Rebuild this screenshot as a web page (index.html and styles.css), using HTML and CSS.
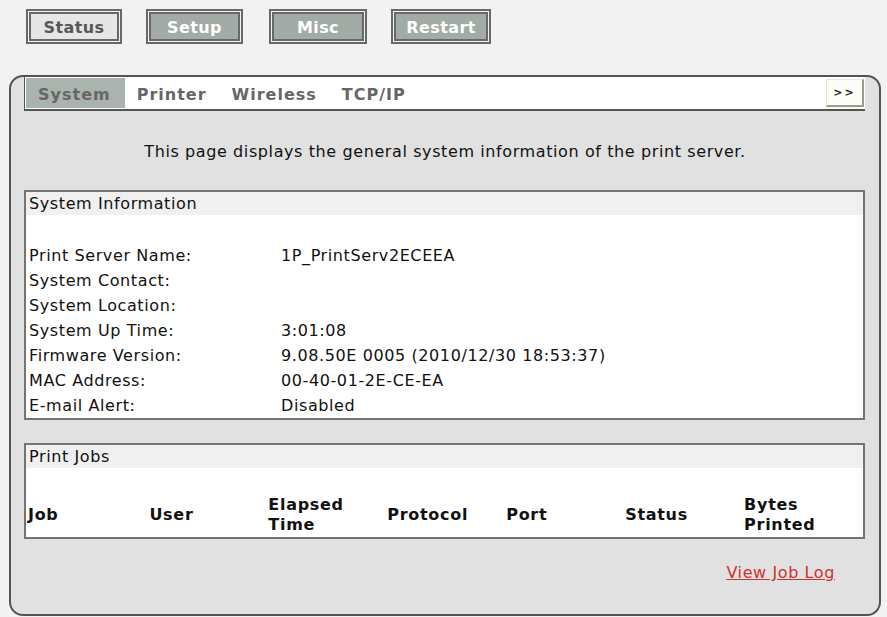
FILE: index.html
```html
<!DOCTYPE html>
<html>
<head>
<meta charset="utf-8">
<title>Print Server - System</title>
<link rel="stylesheet" href="styles.css">
</head>
<body>
<div class="topnav">
  <a class="btn btn-active w96">Status</a>
  <a class="btn w97">Setup</a>
  <a class="btn w98">Misc</a>
  <a class="btn w100">Restart</a>
</div>
<div class="panel">
  <div class="tabbar">
    <span class="tab tab-active">System</span>
    <span class="tab">Printer</span>
    <span class="tab">Wireless</span>
    <span class="tab">TCP/IP</span>
    <span class="more">&gt;&gt;</span>
  </div>
  <p class="desc">This page displays the general system information of the print server.</p>
  <div class="box">
    <div class="box-head">System Information</div>
    <div class="blank"></div>
    <div class="row"><span class="lbl">Print Server Name:</span><span>1P_PrintServ2ECEEA</span></div>
    <div class="row"><span class="lbl">System Contact:</span><span></span></div>
    <div class="row"><span class="lbl">System Location:</span><span></span></div>
    <div class="row"><span class="lbl">System Up Time:</span><span>3:01:08</span></div>
    <div class="row"><span class="lbl">Firmware Version:</span><span>9.08.50E 0005 (2010/12/30 18:53:37)</span></div>
    <div class="row"><span class="lbl">MAC Address:</span><span>00-40-01-2E-CE-EA</span></div>
    <div class="row"><span class="lbl">E-mail Alert:</span><span>Disabled</span></div>
  </div>
  <div class="box box-jobs">
    <div class="box-head">Print Jobs</div>
    <div class="blank"></div>
    <div class="jobs-head">
      <span class="jc jc-first">Job</span>
      <span class="jc">User</span>
      <span class="jc">Elapsed<br>Time</span>
      <span class="jc">Protocol</span>
      <span class="jc">Port</span>
      <span class="jc">Status</span>
      <span class="jc">Bytes<br>Printed</span>
    </div>
  </div>
  <div class="loglink"><a href="#">View Job Log</a></div>
</div>
</body>
</html>
```

FILE: styles.css
```css
html, body {
  margin: 0;
  padding: 0;
}
body {
  background: #f2f2f2;
  font-family: "DejaVu Sans", Verdana, sans-serif;
  font-size: 16px;
  letter-spacing: 0.6px;
  color: #111;
  width: 887px;
  height: 617px;
  overflow: hidden;
}
.topnav {
  display: flex;
  padding: 9px 0 0 26px;
  height: 35px;
}
.btn {
  box-sizing: border-box;
  height: 35px;
  border: 2px solid #686868;
  box-shadow: inset 0 0 0 1px #f4f4f4, inset 0 0 0 3px #686868;
  background: #a2aba6;
  color: #fff;
  font-weight: bold;
  font-size: 16px;
  display: flex;
  align-items: center;
  justify-content: center;
  padding-top: 2px;
  margin-right: 24px;
  letter-spacing: 0.4px;
}
.btn-active {
  background: #e6e6e6;
  color: #575757;
}
.w96 { width: 96px; }
.w97 { width: 97px; margin-right: 26px; }
.w98 { width: 98px; }
.w100 { width: 100px; }

.panel {
  box-sizing: border-box;
  margin: 31px 0 0 9px;
  width: 872px;
  height: 541px;
  border: 2px solid #545454;
  border-radius: 14px;
  background: #e1e1e1;
  padding: 0 13px 0 13px;
}
.tabbar {
  display: flex;
  align-items: center;
  background: #fff;
  border-left: 1px solid #555;
  border-bottom: 2px solid #555;
  height: 32px;
  padding: 0 1px;
  margin-right: 1px;
}
.tab {
  box-sizing: border-box;
  height: 30px;
  display: flex;
  align-items: center;
  padding: 3px 13px 0 12px;
  font-weight: bold;
  font-size: 16px;
  letter-spacing: 1px;
  color: #666;
}
.tab-active {
  background: #aab3ae;
  padding: 3px 14px 0 12px;
}
.more {
  margin-left: auto;
  box-sizing: border-box;
  width: 38px;
  height: 28px;
  background: #fdfdf8;
  border-top: 1px solid #e6e6dc;
  border-left: 1px solid #e6e6dc;
  border-right: 2px solid #9c9c8c;
  border-bottom: 2px solid #9c9c8c;
  font-size: 11px;
  font-weight: bold;
  text-align: center;
  line-height: 26px;
  letter-spacing: 2px;
  color: #222;
}
.desc {
  margin: 0;
  height: 79px;
  line-height: 81px;
  text-align: center;
  color: #111;
}
.box {
  border: 2px solid #747474;
  background: #fff;
  margin-right: 1px;
}
.box-head {
  background: #f0f0f0;
  height: 23px;
  line-height: 24px;
  padding-left: 3px;
}
.blank {
  height: 28px;
}
.row {
  display: flex;
  height: 25px;
  line-height: 26px;
  padding-left: 3px;
}
.lbl {
  width: 252px;
}
.box-jobs {
  margin-top: 23px;
}
.box-jobs .blank {
  height: 25px;
}
.jobs-head {
  display: flex;
  align-items: center;
  height: 44px;
  padding-left: 2px;
}
.jc {
  width: 119.5px;
  font-weight: bold;
  font-size: 16px;
  letter-spacing: 0.7px;
  line-height: 20px;
}
.jc-first {
  width: 122px;
}
.loglink {
  text-align: right;
  padding: 24px 31px 0 0;
}
.loglink a {
  color: #cc3333;
  text-decoration: underline;
}
```
